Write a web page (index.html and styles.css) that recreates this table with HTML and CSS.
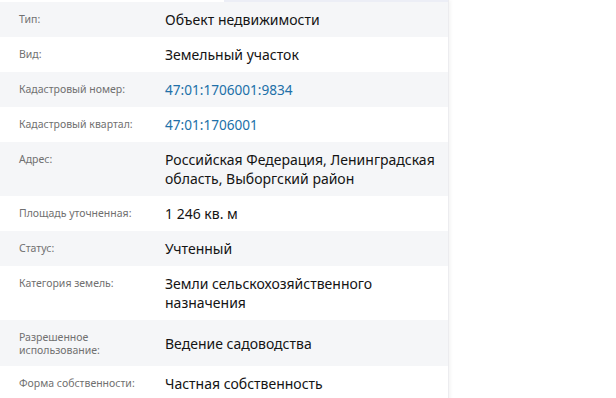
FILE: index.html
```html
<!DOCTYPE html>
<html lang="ru">
<head>
<meta charset="utf-8">
<link rel="stylesheet" href="styles.css">
</head>
<body>
<div class="panel">
  <div class="topbar"><div class="tab-line"></div></div>
  <div class="row alt">
    <div class="label">Тип:</div>
    <div class="value">Объект недвижимости</div>
  </div>
  <div class="row">
    <div class="label">Вид:</div>
    <div class="value">Земельный участок</div>
  </div>
  <div class="row alt">
    <div class="label">Кадастровый номер:</div>
    <div class="value link">47:01:1706001:9834</div>
  </div>
  <div class="row">
    <div class="label">Кадастровый квартал:</div>
    <div class="value link">47:01:1706001</div>
  </div>
  <div class="row alt">
    <div class="label">Адрес:</div>
    <div class="value">Российская Федерация, Ленинградская область, Выборгский район</div>
  </div>
  <div class="row">
    <div class="label">Площадь уточненная:</div>
    <div class="value">1 246 кв. м</div>
  </div>
  <div class="row alt">
    <div class="label">Статус:</div>
    <div class="value">Учтенный</div>
  </div>
  <div class="row">
    <div class="label">Категория земель:</div>
    <div class="value">Земли сельскохозяйственного назначения</div>
  </div>
  <div class="row alt">
    <div class="label">Разрешенное использование:</div>
    <div class="value">Ведение садоводства</div>
  </div>
  <div class="row">
    <div class="label">Форма собственности:</div>
    <div class="value">Частная собственность</div>
  </div>
</div>
</body>
</html>
```

FILE: styles.css
```css
html, body {
  margin: 0;
  padding: 0;
  background: #ffffff;
}
body {
  font-family: "Noto Sans", "Open Sans", sans-serif;
  height: 398px;
  overflow: hidden;
}
.panel {
  width: 448px;
  min-height: 398px;
  border-right: 1px solid #ececef;
  box-shadow: 2px 0 3px rgba(0, 0, 0, 0.04);
  background: #fff;
}
.topbar {
  height: 2px;
  display: flex;
  justify-content: flex-end;
}
.tab-line {
  width: 224px;
  background: #eceef6;
}
.row {
  display: grid;
  grid-template-columns: 146px 1fr;
  padding: 8px 4px 8px 19px;
}
.row.alt {
  background: #f5f6f8;
}
.label {
  align-self: start;
  font-size: 10.5px;
  line-height: 13px;
  color: #707070;
  padding: 3px 0 1px;
}
.value {
  align-self: center;
  font-size: 14px;
  line-height: 19px;
  color: #141414;
}
.value.link {
  font-size: 13.6px;
  color: #2170a8;
}
```
